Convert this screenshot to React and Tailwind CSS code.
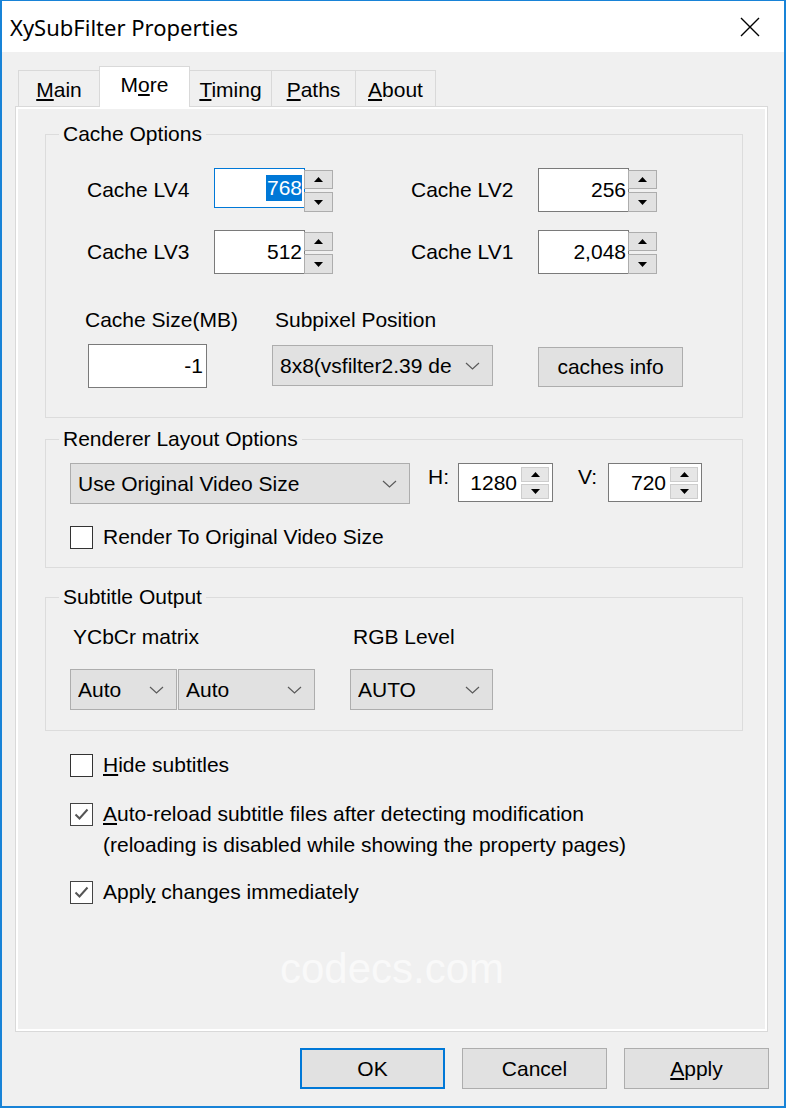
import React from "react";

const Up = () => (
  <svg width="9" height="5" viewBox="0 0 9 5"><path d="M4.5 0L9 5H0z" fill="#000" /></svg>
);
const Down = () => (
  <svg width="9" height="5" viewBox="0 0 9 5"><path d="M0 0H9L4.5 5z" fill="#000" /></svg>
);
const Chevron = () => (
  <svg width="15" height="8" viewBox="0 0 15 8"><path d="M1 1L7.5 7L14 1" fill="none" stroke="#5a5a5a" strokeWidth="1.2" /></svg>
);

function SpinBtns() {
  return (
    <div className="flex flex-col gap-[3px] -ml-px mt-[2px]">
      <div className="w-[29px] h-[19px] bg-[#e1e1e1] border border-[#adadad] flex items-center justify-center"><Up /></div>
      <div className="w-[29px] h-[20px] bg-[#e1e1e1] border border-[#adadad] flex items-center justify-center"><Down /></div>
    </div>
  );
}

function NumField({ value, focused }) {
  return (
    <div className="flex items-start h-[44px]">
      {focused ? (
        <div className="w-[91px] h-[40px] bg-white border border-[#0078d7] flex items-center justify-end pr-[2px]">
          <span className="bg-[#0078d7] text-white leading-[26px] pl-px">{value}</span>
        </div>
      ) : (
        <div className="w-[91px] h-[44px] bg-white border border-[#7a7a7a] flex items-center justify-end pr-[2px]">
          {value}
        </div>
      )}
      <SpinBtns />
    </div>
  );
}

function Combo({ cls, text }) {
  return (
    <div className={"bg-[#e1e1e1] border border-[#adadad] flex items-center justify-between pl-[7px] pr-[12px] " + cls}>
      <span className="whitespace-nowrap overflow-hidden">{text}</span>
      <Chevron />
    </div>
  );
}

function InlineSpin({ value, cls }) {
  return (
    <div className={"h-[39px] bg-white border border-[#7a7a7a] flex " + cls}>
      <div className="flex-1 self-center text-right pr-[4px]">{value}</div>
      <div className="w-[28px] mt-[3px] mb-[2px] mr-[3px] flex flex-col gap-[2px]">
        <div className="flex-1 bg-[#e6e6e6] border border-[#cdcdcd] flex items-center justify-center"><Up /></div>
        <div className="flex-1 bg-[#e6e6e6] border border-[#cdcdcd] flex items-center justify-center"><Down /></div>
      </div>
    </div>
  );
}

function Check({ checked }) {
  return (
    <div className={"w-[23px] h-[23px] bg-white border flex items-center justify-center shrink-0 " + (checked ? "border-[#444]" : "border-[#333]")}>
      {checked && (
        <svg width="17" height="14" viewBox="0 0 17 14">
          <path d="M2.5 7.5L6.5 11.5L14.5 2.5" fill="none" stroke="#555" strokeWidth="2" />
        </svg>
      )}
    </div>
  );
}

function Tab({ children, selected, cls }) {
  if (selected) {
    return (
      <div className={"relative z-10 h-[41px] -mb-px bg-white border border-b-0 border-[#d9d9d9] flex items-center justify-center pb-[5px] " + cls}>
        {children}
      </div>
    );
  }
  return (
    <div className={"h-[36px] bg-[#f0f0f0] border border-b-0 border-[#d9d9d9] flex items-center justify-center pt-[2px] " + cls}>
      {children}
    </div>
  );
}

export default function App() {
  return (
    <div className="w-[786px] h-[1108px] bg-[#f0f0f0] border-x-2 border-b-2 border-t border-[#1883d7] font-['Liberation_Sans',Arial,sans-serif] text-[21px] leading-[28px] text-black flex flex-col">
      {/* Title bar */}
      <div className="h-[51px] bg-white flex items-center justify-between pl-[8px] pr-[24px] shrink-0">
        <span className="font-['Noto_Sans',sans-serif] text-[22px] leading-[28px]">XySubFilter Properties</span>
        <svg width="20" height="20" viewBox="0 0 20 20">
          <path d="M1 1L19 19M19 1L1 19" stroke="#000" strokeWidth="1.4" />
        </svg>
      </div>

      <div className="pl-[13px]">
        {/* Tabs */}
        <div className="h-[54px] flex items-end pl-[3px]">
          <Tab cls="w-[82px]"><span><span className="underline underline-offset-2">M</span>ain</span></Tab>
          <Tab selected cls="w-[91px] -ml-px"><span>M<span className="underline underline-offset-2">o</span>re</span></Tab>
          <Tab cls="w-[83px] -ml-px"><span><span className="underline underline-offset-2">T</span>iming</span></Tab>
          <Tab cls="w-[85px] -ml-px"><span><span className="underline underline-offset-2">P</span>aths</span></Tab>
          <Tab cls="w-[81px] -ml-px"><span><span className="underline underline-offset-2">A</span>bout</span></Tab>
        </div>

        {/* Panel */}
        <div className="w-[753px] h-[926px] border border-[#d9d9d9]">
          <div className="h-full border-2 border-white pl-[27px] pt-[11px] flex flex-col">
            {/* Cache Options */}
            <fieldset className="w-[698px] border border-[#dcdcdc] p-0 m-0">
              <legend className="ml-[13px] px-[4px] leading-[28px]">Cache Options</legend>
              <div className="pl-[41px] pt-[20px] pb-[29px]">
                <div className="flex items-start">
                  <div className="flex items-start w-[324px]">
                    <div className="w-[127px] h-[44px] flex items-center">Cache LV4</div>
                    <NumField value="768" focused />
                  </div>
                  <div className="flex items-start">
                    <div className="w-[127px] h-[44px] flex items-center">Cache LV2</div>
                    <NumField value="256" />
                  </div>
                </div>
                <div className="flex items-start mt-[18px]">
                  <div className="flex items-start w-[324px]">
                    <div className="w-[127px] h-[44px] flex items-center">Cache LV3</div>
                    <NumField value="512" />
                  </div>
                  <div className="flex items-start">
                    <div className="w-[127px] h-[44px] flex items-center">Cache LV1</div>
                    <NumField value="2,048" />
                  </div>
                </div>
                <div className="flex mt-[32px] -ml-[2px]">
                  <div className="w-[187px] flex flex-col">
                    <div>Cache Size(MB)</div>
                    <div className="ml-[3px] mt-[10px] w-[119px] h-[44px] bg-white border border-[#7a7a7a] flex items-center justify-end pr-[3px]">-1</div>
                  </div>
                  <div className="w-[266px] flex flex-col">
                    <div className="ml-[3px]">Subpixel Position</div>
                    <Combo cls="mt-[11px] w-[221px] h-[41px]" text="8x8(vsfilter2.39 de" />
                  </div>
                  <div className="self-end mb-px w-[145px] h-[40px] bg-[#e1e1e1] border border-[#adadad] flex items-center justify-center">
                    caches info
                  </div>
                </div>
              </div>
            </fieldset>

            {/* Renderer Layout Options */}
            <fieldset className="mt-[7px] w-[698px] border border-[#dcdcdc] p-0 m-0">
              <legend className="ml-[13px] px-[4px] leading-[28px]">Renderer Layout Options</legend>
              <div className="pl-[24px] pt-[10px] pb-[16px]">
                <div className="flex items-start">
                  <Combo cls="w-[340px] h-[41px]" text="Use Original Video Size" />
                  <div className="ml-[18px] w-[30px]">H:</div>
                  <InlineSpin value="1280" cls="w-[95px]" />
                  <div className="ml-[25px] w-[30px]">V:</div>
                  <InlineSpin value="720" cls="w-[94px]" />
                </div>
                <div className="mt-[19px] h-[28px] flex items-center">
                  <Check />
                  <span className="ml-[10px]">Render To Original Video Size</span>
                </div>
              </div>
            </fieldset>

            {/* Subtitle Output */}
            <fieldset className="mt-[15px] w-[698px] border border-[#dcdcdc] p-0 m-0">
              <legend className="ml-[13px] px-[4px] leading-[28px]">Subtitle Output</legend>
              <div className="pl-[24px] pt-[12px] pb-[20px]">
                <div className="flex">
                  <div className="w-[280px] pl-[3px]">YCbCr matrix</div>
                  <div className="pl-[3px]">RGB Level</div>
                </div>
                <div className="flex mt-[18px]">
                  <Combo cls="w-[107px] h-[41px]" text="Auto" />
                  <Combo cls="ml-px w-[137px] h-[41px]" text="Auto" />
                  <Combo cls="ml-[35px] w-[143px] h-[41px]" text="AUTO" />
                </div>
              </div>
            </fieldset>

            {/* Checkboxes */}
            <div className="pl-[25px]">
              <div className="mt-[20px] h-[28px] flex items-center">
                <Check />
                <span className="ml-[10px]"><span className="underline underline-offset-2">H</span>ide subtitles</span>
              </div>
              <div className="mt-[21px] h-[28px] flex items-center">
                <Check checked />
                <span className="ml-[10px]"><span className="underline underline-offset-2">A</span>uto-reload subtitle files after detecting modification</span>
              </div>
              <div className="mt-[3px] h-[28px] pl-[33px]">(reloading is disabled while showing the property pages)</div>
              <div className="mt-[19px] h-[28px] flex items-center">
                <Check checked />
                <span className="ml-[10px]">Appl<span className="underline underline-offset-2">y</span> changes immediately</span>
              </div>
            </div>

            {/* Watermark */}
            <div className="mt-[38px] w-[694px] text-center text-[42px] leading-[50px] text-[#f9f9f9] select-none">
              codecs.com
            </div>
          </div>
        </div>
      </div>

      {/* Buttons */}
      <div className="mt-[16px] flex justify-end gap-[17px] pr-[15px]">
        <div className="w-[145px] h-[41px] bg-[#e1e1e1] border-2 border-[#0078d7] flex items-center justify-center">OK</div>
        <div className="w-[145px] h-[41px] bg-[#e1e1e1] border border-[#adadad] flex items-center justify-center">Cancel</div>
        <div className="w-[145px] h-[41px] bg-[#e1e1e1] border border-[#adadad] flex items-center justify-center">
          <span><span className="underline underline-offset-2">A</span>pply</span>
        </div>
      </div>
    </div>
  );
}
